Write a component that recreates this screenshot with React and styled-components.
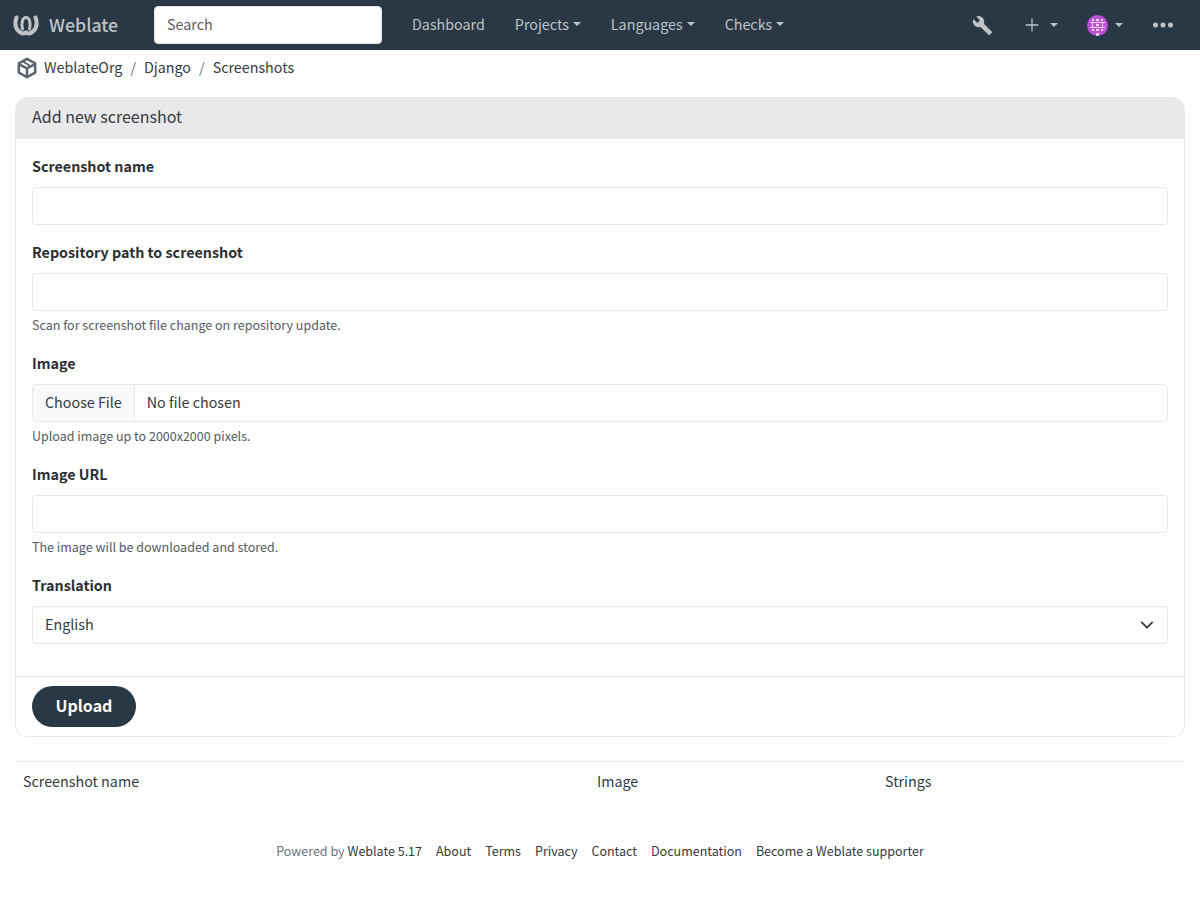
import React from "react";
import styled, { createGlobalStyle } from "styled-components";

const GlobalStyle = createGlobalStyle`
  html, body {
    margin: 0;
    padding: 0;
    background: #fff;
    color: #212529;
    font-family: "Noto Sans CJK JP", "Noto Sans", sans-serif;
    font-size: 14.3px;
  }
  * {
    box-sizing: border-box;
  }
`;

const Navbar = styled.nav`
  display: flex;
  align-items: center;
  height: 50px;
  padding: 0 22px 0 12px;
  background: #2a3744;
`;

const Brand = styled.a`
  display: flex;
  align-items: center;
  gap: 9px;
  width: 142px;
  color: #bfc3c7;
  font-size: 17.8px;
  font-weight: 500;
  line-height: 24px;
  span {
    margin-bottom: 2px;
  }
`;

const SearchInput = styled.input`
  width: 228px;
  height: 38px;
  padding: 0 12px 4px;
  border: 1px solid #dee2e6;
  border-radius: 4px;
  background: #fff;
  font: inherit;
  &::placeholder {
    color: #595c5f;
    opacity: 1;
  }
`;

const NavLinks = styled.div`
  display: flex;
  margin-left: 15px;
`;

const NavLink = styled.a`
  display: flex;
  align-items: center;
  padding: 0 15px 4px;
  color: #bfc3c7;
`;

const Caret = styled.span`
  display: inline-block;
  margin-left: ${(p) => p.$gap || 4}px;
  margin-top: ${(p) => (p.$gap ? 0 : 2)}px;
  border-top: 4px solid currentColor;
  border-left: 4px solid transparent;
  border-right: 4px solid transparent;
`;

const NavRight = styled.div`
  display: flex;
  align-items: center;
  margin-left: auto;
  color: #bfc3c7;
`;

const NavIcon = styled.a`
  display: flex;
  align-items: center;
  margin-left: ${(p) => p.$left || 0}px;
  svg {
    display: block;
    fill: currentColor;
  }
`;

const Avatar = styled.svg`
  border-radius: 50%;
`;

const Breadcrumbs = styled.div`
  display: flex;
  align-items: center;
  height: 47px;
  padding: 0 15px 12px 17px;
  color: #343a40;
`;

const CrumbText = styled.span`
  display: flex;
  margin-bottom: 2px;
`;

const Crumb = styled.a`
  color: #343a40;
`;

const Slash = styled.span`
  margin: 0 8px;
  color: #6c757d;
`;

const OrgIcon = styled.svg`
  margin-right: 7px;
`;

const Card = styled.section`
  margin: 0 15px;
  border: 1px solid #e9e9eb;
  border-radius: 12px;
`;

const CardHeader = styled.h2`
  margin: 0;
  height: 41px;
  padding: 0 16px;
  background: #e9e9eb;
  border-radius: 11px 11px 0 0;
  font-size: 16px;
  font-weight: 400;
  line-height: 36px;
  color: #343a40;
`;

const CardBody = styled.div`
  padding: 16px 16px 32px;
  border-bottom: 1px solid #e9e9eb;
`;

const Field = styled.div`
  margin-bottom: 16px;
  &:last-child {
    margin-bottom: 0;
  }
`;

const Label = styled.label`
  display: block;
  margin-bottom: 8px;
  font-weight: 700;
  line-height: 21px;
  height: 24px;
  color: #2b3035;
`;

const TextInput = styled.input`
  display: block;
  width: 100%;
  height: 38px;
  padding: 0 12px;
  border: 1px solid #e9e9eb;
  border-radius: 4px;
  background: #fff;
  font: inherit;
`;

const Help = styled.div`
  margin-top: 4px;
  font-size: 12.5px;
  line-height: 20px;
  height: 21px;
  color: #555b61;
`;

const FileBox = styled.div`
  display: flex;
  align-items: center;
  height: 38px;
  border: 1px solid #e9e9eb;
  border-radius: 4px;
  overflow: hidden;
  color: #343a40;
`;

const FileButton = styled.span`
  display: flex;
  align-items: center;
  height: 100%;
  padding: 0 12px 4px;
  background: #f8f9fa;
  border-right: 1px solid #e9e9eb;
`;

const FileName = styled.span`
  padding: 0 0 4px 12px;
`;

const SelectBox = styled.div`
  position: relative;
`;

const Select = styled.select`
  display: block;
  width: 100%;
  height: 38px;
  padding: 0 36px 4px 12px;
  border: 1px solid #e9e9eb;
  border-radius: 4px;
  background: #fff;
  color: #343a40;
  font: inherit;
  appearance: none;
`;

const Chevron = styled.svg`
  position: absolute;
  top: 12px;
  right: 14px;
  fill: none;
  stroke: #343a40;
  stroke-width: 2;
  stroke-linecap: round;
  stroke-linejoin: round;
  pointer-events: none;
`;

const CardFooter = styled.div`
  padding: 9px 16px;
`;

const UploadButton = styled.button`
  display: block;
  width: 104px;
  height: 41px;
  padding: 0 0 3px;
  border: 0;
  border-radius: 21px;
  background: #2a3744;
  color: #fff;
  font: inherit;
  font-size: 16px;
  font-weight: 700;
`;

const ScreenshotTable = styled.div`
  display: grid;
  grid-template-columns: 574px 288px 1fr;
  margin: 24px 15px 0;
  padding: 8px;
  border-top: 1px solid #e9e9eb;
  line-height: 21px;
  height: 41px;
  color: #343a40;
`;

const Footer = styled.footer`
  display: flex;
  justify-content: center;
  gap: 14px;
  margin-top: 38px;
  font-size: 12.5px;
  line-height: 21px;
  color: #343a40;
`;

const Powered = styled.span`
  color: #6c757d;
`;

const FooterLink = styled.a`
  color: #343a40;
`;

const footerLinks = ["About", "Terms", "Privacy", "Contact", "Documentation", "Become a Weblate supporter"];

const WeblateLogo = () => (
  <svg width="28" height="24" viewBox="0 0 28 24" fill="none" stroke="#bfc3c7" strokeLinecap="round">
    <path d="M4.500 4.500C2.500 10 3.500 15 6.500 18c2.500 2.500 5.500 3 8 1.500" strokeWidth="4" />
    <path d="M23.500 4.500C25.500 10 24.500 15 21.500 18c-2.500 2.500-5.500 3-8 1.500" strokeWidth="4" />
    <path d="M10.500 16C9 10 10.500 4.500 14 4.500S19 10 17.500 16" strokeWidth="3" />
  </svg>
);

const AvatarIcon = () => (
  <Avatar width="21" height="21" viewBox="0 0 21 21">
    <rect width="21" height="21" fill="#bd4fd6" />
    <g fill="#f5d5fa">
      <rect x="5" y="4" width="2" height="2" />
      <rect x="9" y="4" width="3" height="2" />
      <rect x="14" y="4" width="2" height="2" />
      <rect x="3" y="7" width="15" height="1" />
      <rect x="5" y="8" width="1" height="4" />
      <rect x="15" y="8" width="1" height="4" />
      <rect x="9" y="9" width="3" height="2" />
      <rect x="3" y="12" width="15" height="1" />
      <rect x="5" y="14" width="2" height="2" />
      <rect x="9" y="14" width="3" height="2" />
      <rect x="14" y="14" width="2" height="2" />
      <rect x="9" y="18" width="3" height="3" />
    </g>
  </Avatar>
);

export default function App() {
  return (
    <>
      <GlobalStyle />
      <Navbar>
        <Brand>
          <WeblateLogo />
          <span>Weblate</span>
        </Brand>
        <SearchInput placeholder="Search" />
        <NavLinks>
          <NavLink>Dashboard</NavLink>
          <NavLink>Projects<Caret /></NavLink>
          <NavLink>Languages<Caret /></NavLink>
          <NavLink>Checks<Caret /></NavLink>
        </NavLinks>
        <NavRight>
          <NavIcon>
            <svg width="21" height="21" viewBox="0 0 24 24">
              <path d="M22.7,19L13.6,9.900C14.500,7.600 14,4.900 12.100,3C10.100,1 7.100,0.600 4.700,1.700L9,6L6,9L1.600,4.700C0.400,7.100 0.900,10.100 2.900,12.100C4.800,14 7.500,14.500 9.800,13.600L18.900,22.700C19.300,23.100 19.900,23.100 20.300,22.700L22.600,20.400C23.100,20 23.100,19.300 22.700,19Z" />
            </svg>
          </NavIcon>
          <NavIcon $left={28}>
            <svg width="22" height="22" viewBox="0 0 24 24">
              <path d="M19,12.700H12.700V19H11.300V12.700H5V11.300H11.300V5H12.700V11.300H19V12.700Z" />
            </svg>
            <Caret $gap={7} />
          </NavIcon>
          <NavIcon $left={29}>
            <AvatarIcon />
            <Caret $gap={7} />
          </NavIcon>
          <NavIcon $left={25}>
            <svg width="30" height="30" viewBox="0 0 24 24">
              <path d="M16,12A2,2 0 0,1 18,10A2,2 0 0,1 20,12A2,2 0 0,1 18,14A2,2 0 0,1 16,12M10,12A2,2 0 0,1 12,10A2,2 0 0,1 14,12A2,2 0 0,1 10,12M4,12A2,2 0 0,1 6,10A2,2 0 0,1 8,12A2,2 0 0,1 6,14A2,2 0 0,1 4,12Z" />
            </svg>
          </NavIcon>
        </NavRight>
      </Navbar>
      <Breadcrumbs>
        <OrgIcon width="20" height="22" viewBox="0 0 22 24" fill="none" stroke="#5c6670" strokeWidth="2.800" strokeLinejoin="round">
          <path d="M11 2 2 7v10l9 5 9-5V7L11 2Z" />
          <path d="M2.500 8 11 12.500 19.500 8M11 12.500V21" />
          <path d="M7 5 15 10" strokeWidth="2" />
        </OrgIcon>
        <CrumbText>
          <Crumb>WeblateOrg</Crumb>
          <Slash>/</Slash>
          <Crumb>Django</Crumb>
          <Slash>/</Slash>
          <Crumb>Screenshots</Crumb>
        </CrumbText>
      </Breadcrumbs>
      <Card>
        <CardHeader>Add new screenshot</CardHeader>
        <CardBody>
          <Field>
            <Label>Screenshot name</Label>
            <TextInput />
          </Field>
          <Field>
            <Label>Repository path to screenshot</Label>
            <TextInput />
            <Help>Scan for screenshot file change on repository update.</Help>
          </Field>
          <Field>
            <Label>Image</Label>
            <FileBox>
              <FileButton>Choose File</FileButton>
              <FileName>No file chosen</FileName>
            </FileBox>
            <Help>Upload image up to 2000x2000 pixels.</Help>
          </Field>
          <Field>
            <Label>Image URL</Label>
            <TextInput />
            <Help>The image will be downloaded and stored.</Help>
          </Field>
          <Field>
            <Label>Translation</Label>
            <SelectBox>
              <Select defaultValue="en">
                <option value="en">English</option>
              </Select>
              <Chevron width="14" height="14" viewBox="0 0 16 16">
                <path d="m2 5 6 6 6-6" />
              </Chevron>
            </SelectBox>
          </Field>
        </CardBody>
        <CardFooter>
          <UploadButton>Upload</UploadButton>
        </CardFooter>
      </Card>
      <ScreenshotTable>
        <span>Screenshot name</span>
        <span>Image</span>
        <span>Strings</span>
      </ScreenshotTable>
      <Footer>
        <span>
          <Powered>Powered by </Powered>
          <FooterLink>Weblate 5.17</FooterLink>
        </span>
        {footerLinks.map((text) => (
          <FooterLink key={text}>{text}</FooterLink>
        ))}
      </Footer>
    </>
  );
}
